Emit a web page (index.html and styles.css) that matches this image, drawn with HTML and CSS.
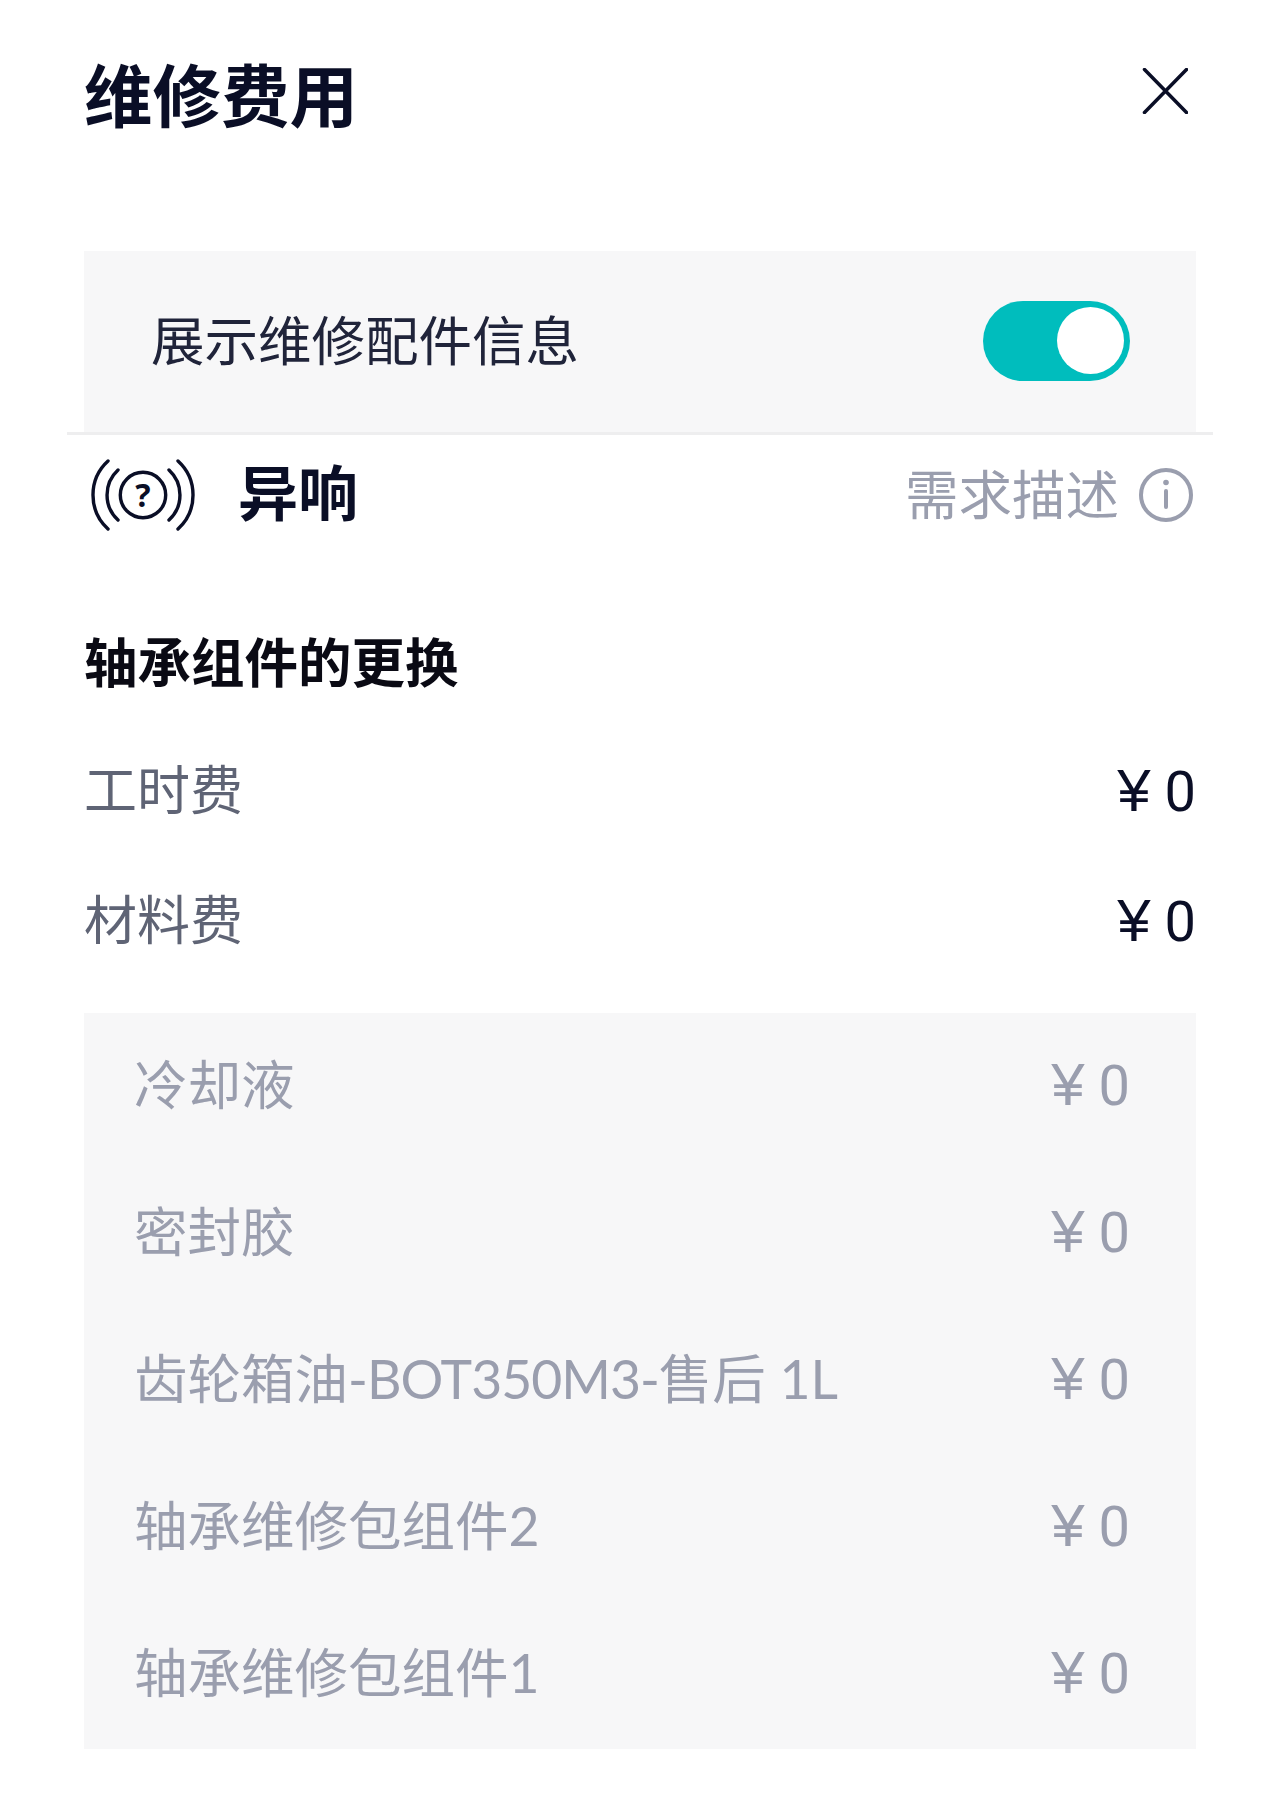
FILE: index.html
```html
<!DOCTYPE html>
<html lang="zh-CN">
<head>
<meta charset="utf-8">
<title>维修费用</title>
<link rel="stylesheet" href="styles.css">
</head>
<body>
<main class="page">
  <header class="header">
    <h1 class="title">维修费用</h1>
    <svg class="close" viewBox="0 0 46 46" aria-hidden="true"><path d="M2.500 1.500 44.500 44.500M44.500 1.500 2.500 44.500"/></svg>
  </header>
  <section class="toggle-panel">
    <span class="toggle-label">展示维修配件信息</span>
    <span class="switch"><span class="knob"></span></span>
  </section>
  <div class="divider"></div>
  <section class="fault">
    <svg class="sound" viewBox="0 0 100 70" aria-hidden="true">
      <circle cx="50" cy="35" r="22.7"/>
      <path d="M15 1A46 46 0 0 0 15 69M25 10A34 34 0 0 0 25 60M85 1A46 46 0 0 1 85 69M76 10A34 34 0 0 1 76 60"/>
      <text class="sound-q" x="50" y="46.500" text-anchor="middle">?</text>
    </svg>
    <span class="fault-name">异响</span>
    <span class="fault-desc">需求描述</span>
    <svg class="info" viewBox="0 0 54 54" aria-hidden="true">
      <circle cx="27" cy="27" r="25"/>
      <path d="M27 23V39"/>
      <circle class="info-dot" cx="27" cy="14.500" r="2.800"/>
    </svg>
  </section>
  <h2 class="job">轴承组件的更换</h2>
  <div class="fee-row"><span class="fee-name">工时费</span><span class="fee-value amount"><span class="yen">¥</span> 0</span></div>
  <div class="fee-row"><span class="fee-name">材料费</span><span class="fee-value amount"><span class="yen">¥</span> 0</span></div>
  <section class="parts">
    <div class="part-row"><span>冷却液</span><span class="amount"><span class="yen">¥</span> 0</span></div>
    <div class="part-row"><span>密封胶</span><span class="amount"><span class="yen">¥</span> 0</span></div>
    <div class="part-row"><span>齿轮箱油<span class="latin">-BOT350M3-</span>售后 1L</span><span class="amount"><span class="yen">¥</span> 0</span></div>
    <div class="part-row"><span>轴承维修包组件2</span><span class="amount"><span class="yen">¥</span> 0</span></div>
    <div class="part-row"><span>轴承维修包组件1</span><span class="amount"><span class="yen">¥</span> 0</span></div>
  </section>
</main>
</body>
</html>
```
FILE: styles.css
```css
* { box-sizing: border-box; }
html, body { margin: 0; background: #fff; }
body { font-family: "Lato", "Noto Sans CJK SC", sans-serif; color: #0a0e26; }
.page { width: 1280px; height: 1800px; padding: 0 84px; overflow: hidden; }

.header { height: 251px; padding-top: 60px; display: flex; justify-content: space-between; align-items: flex-start; }
.title { margin: 0; font-size: 68.500px; line-height: 72px; font-weight: 700; color: #0a0e26; }
.close { width: 46px; height: 46px; margin: 8px 8px 0 0; fill: none; stroke: #0a0e26; stroke-width: 3.500; stroke-linecap: round; }

.toggle-panel { height: 181px; background: #f7f7f8; padding: 0 66px 2px 67px; display: flex; align-items: center; justify-content: space-between; }
.toggle-label { font-size: 53.500px; line-height: 64px; color: #20243a; margin-bottom: 2px; }
.switch { width: 147px; height: 80px; border-radius: 40px; background: #00bdbd; display: flex; align-items: center; justify-content: flex-end; padding-right: 6px; }
.knob { width: 67px; height: 67px; border-radius: 50%; background: #fff; }

.divider { height: 3px; margin: 0 -17px; background: #eeeeef; }

.fault { height: 119px; display: flex; align-items: center; }
.sound { width: 100px; height: 70px; margin-left: 9px; overflow: visible; fill: none; stroke: #0a0e26; stroke-width: 3.400; stroke-linecap: round; }
.sound-q { font-family: "Noto Sans", sans-serif; font-size: 32px; font-weight: 700; fill: #0a0e26; stroke: none; }
.fault-name { margin: 0 0 4px 45px; font-size: 60px; line-height: 70px; font-weight: 700; color: #0a0e26; }
.fault-desc { margin: 0 0 2px auto; font-size: 53.500px; line-height: 64px; color: #9a9eae; }
.info { width: 54px; height: 54px; margin: 0 3px 0 20px; fill: none; stroke: #9a9eae; stroke-width: 4; stroke-linecap: round; }
.info-dot { fill: #9a9eae; stroke: none; }

.job { margin: 0; padding-top: 76px; height: 171px; font-size: 53.500px; line-height: 64px; font-weight: 700; color: #0a0a14; }
.fee-row { height: 130px; display: flex; justify-content: space-between; align-items: center; font-size: 53px; line-height: 64px; }
.fee-name { color: #5f6475; }
.fee-value { color: #0a0e26; }
.amount { font-family: "Roboto", sans-serif; font-size: 56px; font-weight: 400; line-height: 64px; margin-top: 4px; }
.yen { font-family: "Liberation Sans", sans-serif; font-size: 60px; line-height: 1; }

.parts { margin-top: 28px; height: 736px; background: #f7f7f8; padding: 0 66px 0 50px; color: #9a9eae; font-size: 53.500px; line-height: 64px; display: flex; flex-direction: column; }
.part-row { height: 147.200px; display: flex; justify-content: space-between; align-items: center; }
.part-row:first-child { margin-top: -3px; }
.latin { letter-spacing: -1px; }
```
